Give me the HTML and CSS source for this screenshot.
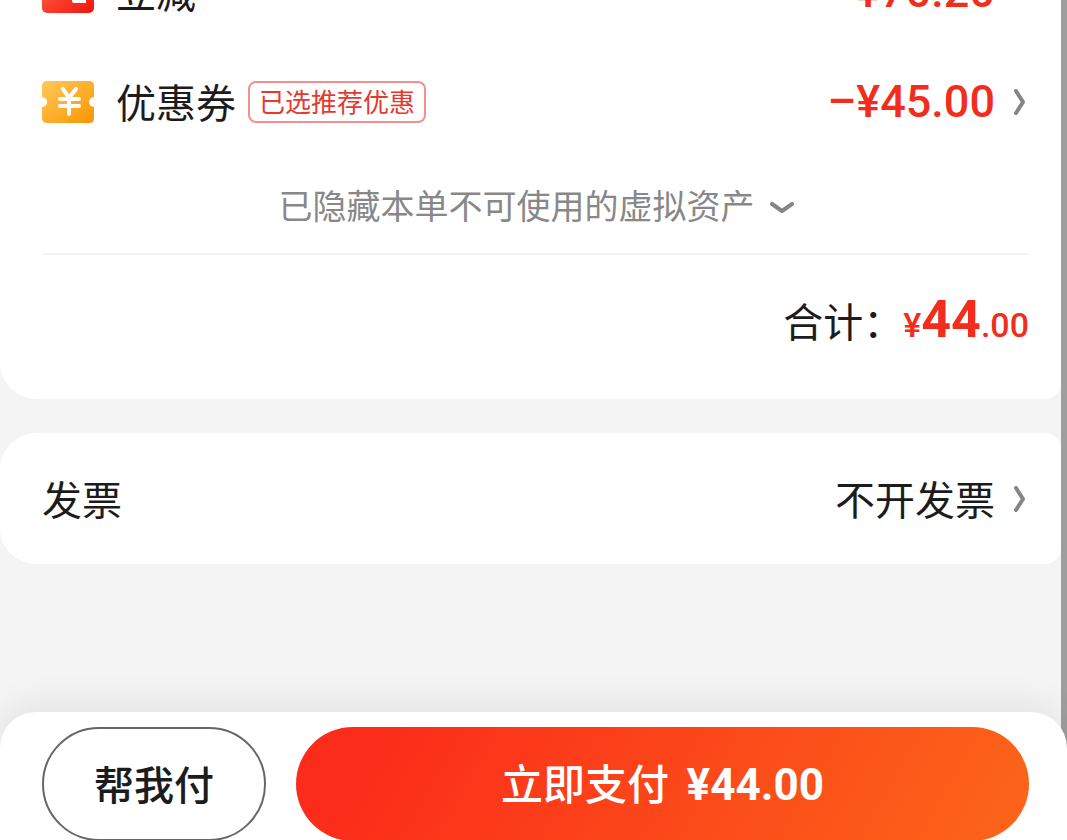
FILE: index.html
```html
<!DOCTYPE html>
<html lang="zh-CN">
<head>
<meta charset="utf-8">
<meta name="viewport" content="width=device-width, initial-scale=1">
<title>确认订单</title>
<link rel="stylesheet" href="styles.css">
</head>
<body>
<div class="page">
  <main class="content">
    <section class="card summary">
      <div class="row">
        <svg class="badge-icon" viewBox="0 0 52 42" aria-hidden="true">
          <defs><linearGradient id="red" x1="0" y1="0" x2="1" y2="1"><stop offset="0" stop-color="#ff6a4d"/><stop offset="1" stop-color="#f5130c"/></linearGradient></defs>
          <rect width="52" height="42" rx="5" fill="url(#red)"/>
          <path d="M30 24h14v8H32q-2 0-2-2z" fill="#fff"/>
        </svg>
        <span class="label">立减</span>
        <span class="amount inset">–¥70.20</span>
      </div>
      <div class="row">
        <svg class="badge-icon" viewBox="0 0 52 42" aria-hidden="true">
          <defs><linearGradient id="gold" x1="0" y1="0" x2="1" y2="1"><stop offset="0" stop-color="#ffc95c"/><stop offset="1" stop-color="#fb9500"/></linearGradient></defs>
          <path d="M5 0h42q5 0 5 5v11a5 5 0 0 0 0 10v11q0 5-5 5H5q-5 0-5-5V26a5 5 0 0 0 0-10V5q0-5 5-5Z" fill="url(#gold)"/>
          <path d="M21 8l6 9 7-9M18 18h19M18 25h19M27 18v15" fill="none" stroke="#fff" stroke-width="4" stroke-linecap="round" stroke-linejoin="round"/>
        </svg>
        <span class="label">优惠券</span>
        <span class="tag">已选推荐优惠</span>
        <button class="value amount" type="button">–¥45.00
          <svg class="chevron" viewBox="0 0 12 26" aria-hidden="true"><path d="M2 2l7 11-7 11"/></svg>
        </button>
      </div>
      <button class="note" type="button">已隐藏本单不可使用的虚拟资产
        <svg class="chevron-down" viewBox="0 0 26 12" aria-hidden="true"><path d="M3 2l10 7 10-7"/></svg>
      </button>
      <div class="total">
        <span>合计：</span>
        <span class="total-price"><small>¥</small><strong>44</strong><span class="cents">.00</span></span>
      </div>
    </section>
    <section class="card invoice">
      <span class="label">发票</span>
      <button class="value" type="button"><span class="label">不开发票</span>
        <svg class="chevron" viewBox="0 0 12 26" aria-hidden="true"><path d="M2 2l7 11-7 11"/></svg>
      </button>
    </section>
  </main>
  <footer class="pay-bar">
    <button class="friend-pay" type="button">帮我付</button>
    <button class="pay-now" type="button">立即支付 <span class="pay-price">¥44.00</span></button>
  </footer>
</div>
</body>
</html>
```
FILE: styles.css
```css
* {
  box-sizing: border-box;
}

body {
  margin: 0;
  font-family: "Noto Sans CJK SC", sans-serif;
  font-size: 40px;
  line-height: 56px;
  color: #1c1c1c;
}

button {
  padding: 0;
  border: 0;
  background: none;
  color: inherit;
  font: inherit;
  cursor: pointer;
}

.page {
  display: flex;
  flex-direction: column;
  height: 100vh;
  overflow: hidden;
  background: linear-gradient(to left, #9e9e9e 6px, #f4f4f4 6px);
}

/* Scrolled to the end: the last card stays in view above the pay bar. */
.content {
  display: flex;
  flex: 1;
  flex-direction: column;
  justify-content: flex-end;
  gap: 34px;
  min-height: 0;
  padding: 0 6px 148px 0;
}

.card {
  flex: none;
  padding: 0 32px 0 42px;
  border-radius: 36px 16px 16px 36px;
  background: #fff;
}

.row {
  display: flex;
  align-items: center;
  height: 110px;
}

.label {
  padding-bottom: 2px;
}

.badge-icon {
  flex: none;
  width: 52px;
  height: 42px;
  margin-right: 22px;
}

.tag {
  margin-left: 12px;
  padding: 0 9px 2px;
  border: 2px solid #f3908f;
  border-radius: 8px;
  color: #e5392f;
  font-size: 26px;
  line-height: 36px;
}

.value {
  display: flex;
  align-items: center;
  gap: 19px;
  margin-left: auto;
}

.amount {
  color: #f22d1d;
  font-family: Roboto, sans-serif;
  font-size: 45px;
  font-weight: 500;
}

.inset {
  margin-left: auto;
  padding-right: 34px;
}

.chevron {
  width: 12px;
  height: 26px;
  margin-right: 3px;
}

.chevron path,
.chevron-down path {
  fill: none;
  stroke: #858585;
  stroke-width: 4;
  stroke-linecap: round;
  stroke-linejoin: round;
}

.chevron-down {
  width: 26px;
  height: 12px;
  margin-top: 6px;
}

.note {
  display: flex;
  align-items: center;
  justify-content: center;
  gap: 14px;
  width: 100%;
  height: 98px;
  padding-left: 2px;
  border-bottom: 2px solid #f4f4f4;
  color: #888;
  font-size: 34px;
}

.total {
  display: flex;
  align-items: baseline;
  justify-content: flex-end;
  height: 144px;
  padding-top: 37px;
}

.total-price {
  color: #f22d1d;
  font-family: Roboto, sans-serif;
  font-size: 34px;
  font-weight: 500;
}

.total-price small {
  font-size: 34px;
}

.total-price strong {
  font-size: 52px;
  font-weight: 700;
}

.invoice {
  display: flex;
  align-items: center;
  height: 131px;
}

.pay-bar {
  position: relative;
  display: flex;
  flex: none;
  gap: 30px;
  height: 128px;
  padding: 15px 38px 0 42px;
  border-radius: 36px 36px 0 0;
  background: #fff;
  box-shadow: 0 -6px 36px rgba(0, 0, 0, 0.08);
}

.friend-pay,
.pay-now {
  height: 114px;
  padding-bottom: 2px;
  border-radius: 57px;
  font-weight: 500;
}

.friend-pay {
  flex: none;
  width: 224px;
  border: 2px solid #666;
}

.pay-now {
  flex: 1;
  background: linear-gradient(120deg, #fb2c1a 10%, #fc6619 100%);
  color: #fff;
  font-size: 42px;
}

.pay-price {
  margin-left: 8px;
  font-family: Roboto, sans-serif;
  font-size: 44px;
  font-weight: 700;
}
```
